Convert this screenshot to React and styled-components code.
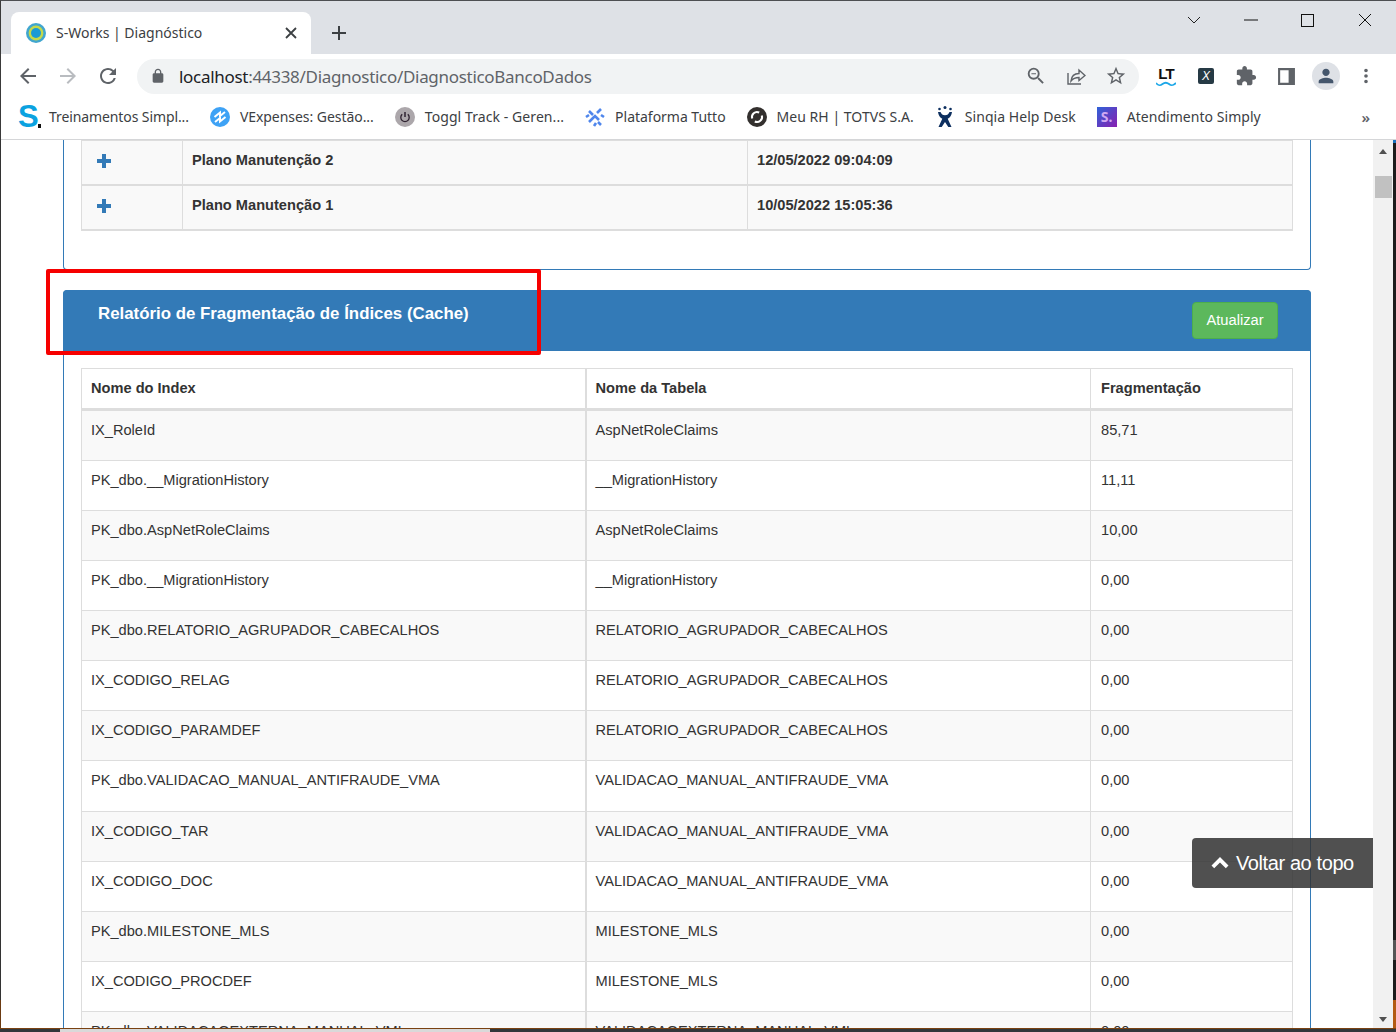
import React from "react";
import styled, { createGlobalStyle } from "styled-components";

const Global = createGlobalStyle`
  html, body { margin: 0; padding: 0; height: 100%; overflow: hidden; background: #fff; }
  * { box-sizing: border-box; }
`;

const Root = styled.div`
  width: 1396px; height: 1032px; display: flex; flex-direction: column; overflow: hidden;
  font-family: "Liberation Sans", Arial, sans-serif; color: #333; background: #fff;
`;
const BrowserChrome = styled.header`
  flex: none; border-top: 1px solid #4d4f52; border-left: 1px solid #3a3a3a;
  font-family: "Noto Sans", sans-serif;
`;
const TabStrip = styled.div`
  height: 53px; background: #dee1e6; display: flex; align-items: flex-end; padding-left: 10px;
`;
const Tab = styled.div`
  width: 300px; height: 42px; background: #fff; border-radius: 8px 8px 0 0;
  display: flex; align-items: center; padding: 0 14px 1px 15px; gap: 10px; position: relative;
`;
const TabTitle = styled.span`
  flex: 1; font-size: 14px; color: #3c4043; white-space: nowrap;
`;
const NewTab = styled.div`
  width: 28px; height: 42px; margin-left: 14px; display: flex; align-items: center; justify-content: center;
`;
const WinControls = styled.div`
  margin-left: auto; align-self: flex-start; display: flex; align-items: center; height: 38px; padding-right: 3px;
`;
const WinBtn = styled.div`
  width: 57px; height: 38px; display: flex; align-items: center; justify-content: center;
`;
const Toolbar = styled.div`
  height: 45px; padding: 5px 10px 6px 7px; display: flex; align-items: center; background: #fff;
`;
const IconBtn = styled.div`
  width: 40px; height: 34px; flex: none; display: flex; align-items: center; justify-content: center;
`;
const Omnibox = styled.div`
  flex: 1; height: 35px; margin: 0 7px 0 9px; background: #f1f3f4; border-radius: 18px;
  display: flex; align-items: center; padding-left: 13px; padding-right: 3px;
`;
const UrlText = styled.div`
  flex: 1; margin-left: 13px; font-size: 17px; letter-spacing: -0.3px; color: #5f6368; white-space: nowrap;
`;
const UrlHost = styled.span` color: #202124; `;
const Avatar = styled.div`
  width: 28px; height: 28px; border-radius: 50%; background: #dee1e6;
  display: flex; align-items: center; justify-content: center;
`;
const BookmarkBar = styled.nav`
  height: 41px; display: flex; align-items: center; padding: 0 0 5px 17px; gap: 20px;
  background: #fff; border-bottom: 1px solid #d5d6d8; position: relative;
`;
const Bookmark = styled.a`
  display: flex; align-items: center; gap: 9px; font-size: 14px; color: #3c4043;
  white-space: nowrap; letter-spacing: ${p => p.$track}px;
`;
const Favicon = styled.span`
  width: 22px; height: 22px; flex: none; display: flex; align-items: center; justify-content: center;
`;
const SLogo = styled.span`
  font: bold 31px/22px "Liberation Sans", sans-serif; color: #0ba2e0; position: relative; width: 22px; height: 22px;
  &::after { content: ""; position: absolute; right: -1px; bottom: 0; width: 3px; height: 4px; background: #111; }
`;
const SquareLogo = styled.span`
  width: 20px; height: 20px; flex: none; background: linear-gradient(135deg, #2f62d8, #8a1fb0);
  color: #cfa8f2; font: bold 14px/20px "Noto Sans", sans-serif; text-align: center;
`;
const More = styled.span`
  margin-left: auto; padding-right: 26px; font-size: 15px; color: #5f6368; font-weight: 600;
`;
const LtBadge = styled.span`
  display: flex; flex-direction: column; align-items: center; width: 20px;
  font: bold 15px/15px "Liberation Sans", sans-serif; color: #111; letter-spacing: -0.8px;
`;
const XBadge = styled.span`
  width: 16px; height: 16px; border-radius: 2px; background: #263a45; color: #fff;
  font: italic 12px/16px "Liberation Sans", sans-serif; text-align: center;
`;

const PageRow = styled.div`
  flex: 1; min-height: 0; display: flex; position: relative;
`;
const LeftEdge = styled.div`
  width: 1px; flex: none; background: linear-gradient(#333 0 860px, #6b3a12 860px);
`;
const RightEdge = styled.div`
  width: 3px; flex: none;
  background: linear-gradient(#1a73c0 0 3px, #1c1c1c 3px 800px, #555 800px 820px, #1c1c1c 820px 860px, #b35a12 860px);
`;
const BottomEdge = styled.div`
  height: 4px; flex: none; border-top: 1px solid #7a4212; display: flex;
  background: #33373a; padding-left: 60px;
`;
const TaskStrip = styled.div`
  width: 430px; background: #d9d9d9;
`;
const Viewport = styled.main`
  flex: 1; min-width: 0; overflow: hidden; position: relative; padding: 0 62px;
`;
const Scrollbar = styled.div`
  width: 20px; flex: none; background: #f1f1f1; display: flex; flex-direction: column; align-items: center;
  padding: 9px 0 6px;
`;
const ScrollThumb = styled.div`
  width: 17px; height: 22px; margin-top: 22px; margin-left: 1px; background: #c1c1c1;
`;
const ScrollArrow = styled.div`
  width: 0; height: 0; border-left: 4.5px solid transparent; border-right: 4.5px solid transparent;
  ${p => p.$down ? "border-top: 5px solid #505050; margin-top: auto;" : "border-bottom: 5px solid #505050;"}
`;
const Panel = styled.section`
  border: 1px solid #337ab7; border-radius: 4px;
  ${p => p.$cut ? "border-top: 0; border-top-left-radius: 0; border-top-right-radius: 0; padding: 0 17px 38px; margin-bottom: 20px;" : ""}
`;
const PanelHead = styled.div`
  height: 61px; margin: -1px -1px 0; background: #337ab7; border-radius: 4px 4px 0 0;
  display: flex; justify-content: space-between; align-items: flex-start; padding: 12px 33px 0 35px;
`;
const PanelTitle = styled.h3`
  margin: 0; padding-top: 3px; font: bold 16.85px/18px "Liberation Sans", sans-serif; color: #fff;
`;
const RefreshBtn = styled.button`
  width: 86px; height: 37px; border: 1px solid #4cae4c; border-radius: 4px; background: #5cb85c;
  color: #fff; font: 14.7px "Liberation Sans", sans-serif; padding: 0;
`;
const PanelBody = styled.div`
  padding: 17px 17px 0;
`;
const Table = styled.table`
  width: 100%; border-collapse: collapse; table-layout: fixed;
  font-size: 14.62px; line-height: 20px; color: #333;
`;
const PlanRow = styled.tr`
  height: 45px; background: #f9f9f9; border-bottom: 2px solid #ddd;
  &:first-child { height: 44px; }
`;
const PlanCell = styled.td`
  border: 1px solid #ddd; border-bottom: 2px solid #ddd; padding: 0 9px 4px 9px; font-weight: bold;
  tr:first-child > & { padding-bottom: 5px; }
`;
const PlusCell = styled.td`
  border: 1px solid #ddd; border-bottom: 2px solid #ddd; padding: 0 0 3px 15px;
`;
const HeadCell = styled.th`
  height: 41.3px; border: 1px solid #ddd; border-bottom: 3px solid #ddd; padding: 0 9px 1px;
  text-align: left; font-weight: bold; background: #fff;
  &:nth-child(2) { border-left-width: 2px; }
  &:last-child { padding-left: 10px; }
`;
const DataRow = styled.tr`
  height: 50.1px;
  background: ${p => p.$odd ? "#f9f9f9" : "#fff"};
  &:first-child { height: 51.1px; }
`;
const DataCell = styled.td`
  border: 1px solid #ddd; padding: 9px 9px 0; vertical-align: top; white-space: nowrap;
  &:nth-child(2) { border-left-width: 2px; }
  &:last-child { padding-left: 10px; }
`;
const RedBox = styled.div`
  position: absolute; left: 45px; top: 129px; width: 495px; height: 86px;
  border: 4px solid #f60000; border-radius: 2px; pointer-events: none;
`;
const BackTop = styled.a`
  position: absolute; right: 0; top: 698px; width: 181px; height: 50px;
  background: rgba(51,51,51,.86); border-radius: 4px 0 0 4px; color: #fff;
  display: flex; align-items: center; gap: 7px; padding: 0 0 0 19px;
  font: 20px "Liberation Sans", sans-serif; letter-spacing: -0.4px;
`;

const Ic = ({ d, size = 24, color = "#5f6368", flip }) => (
  <svg width={size} height={size} viewBox="0 0 24 24" fill={color} style={flip ? { transform: "scaleX(-1)" } : undefined}><path d={d} /></svg>
);
const P = {
  back: "M20 11H7.83l5.59-5.59L12 4l-8 8 8 8 1.41-1.41L7.83 13H20v-2z",
  reload: "M17.65 6.35A7.958 7.958 0 0 0 12 4c-4.42 0-7.99 3.58-7.99 8s3.57 8 7.99 8c3.73 0 6.84-2.55 7.73-6h-2.08A5.99 5.99 0 0 1 12 18c-3.31 0-6-2.69-6-6s2.69-6 6-6c1.66 0 3.14.69 4.22 1.78L13 11h7V4l-2.35 2.35z",
  lock: "M18 8h-1V6c0-2.76-2.24-5-5-5S7 3.24 7 6v2H6c-1.1 0-2 .9-2 2v10c0 1.1.9 2 2 2h12c1.1 0 2-.9 2-2V10c0-1.1-.9-2-2-2zM9 6c0-1.66 1.34-3 3-3s3 1.34 3 3v2H9V6z",
  zoom: "M15.5 14h-.79l-.28-.27A6.471 6.471 0 0 0 16 9.5 6.5 6.5 0 1 0 9.5 16c1.61 0 3.09-.59 4.23-1.57l.27.28v.79l5 4.99L20.49 19l-4.99-5zm-6 0C7.01 14 5 11.99 5 9.5S7.01 5 9.5 5 14 7.01 14 9.5 11.99 14 9.5 14zM7 9h5v1H7z",
  star: "M22 9.24l-7.19-.62L12 2 9.19 8.63 2 9.24l5.46 4.73L5.82 21 12 17.27 18.18 21l-1.63-7.03L22 9.24zM12 15.4l-3.76 2.27 1-4.28-3.32-2.88 4.38-.38L12 6.1l1.71 4.04 4.38.38-3.32 2.88 1 4.28L12 15.4z",
  puzzle: "M20.5 11H19V7c0-1.1-.9-2-2-2h-4V3.5C13 2.12 11.88 1 10.5 1S8 2.12 8 3.5V5H4c-1.1 0-1.99.9-1.99 2v3.8H3.5c1.49 0 2.7 1.21 2.7 2.7s-1.21 2.7-2.7 2.7H2V20c0 1.1.9 2 2 2h3.8v-1.5c0-1.49 1.21-2.7 2.7-2.7 1.49 0 2.7 1.21 2.7 2.7V22H17c1.1 0 2-.9 2-2v-4h1.5c1.38 0 2.5-1.12 2.5-2.5S21.88 11 20.5 11z",
  person: "M12 12c2.21 0 4-1.79 4-4s-1.79-4-4-4-4 1.79-4 4 1.79 4 4 4zm0 2c-2.67 0-8 1.34-8 4v2h16v-2c0-2.66-5.33-4-8-4z",
  dots: "M12 8a2 2 0 1 0 0-4 2 2 0 0 0 0 4zm0 2a2 2 0 1 0 0 4 2 2 0 0 0 0-4zm0 6a2 2 0 1 0 0 4 2 2 0 0 0 0-4z",
};

const TabFavicon = () => (
  <svg width="20" height="20" viewBox="0 0 20 20"><circle cx="10" cy="10" r="10" fill="#41a6cf" /><circle cx="10" cy="10" r="7.4" fill="#c5d94a" /><circle cx="10" cy="10" r="5" fill="#1a9ad6" /></svg>
);
const CloseX = () => (
  <svg width="12" height="12" viewBox="0 0 12 12" stroke="#3c4043" strokeWidth="1.8"><path d="M1 1l10 10M11 1L1 11" /></svg>
);
const Plus = () => (
  <svg width="16" height="16" viewBox="0 0 16 16" fill="#3c4043"><path d="M7 1h2v6h6v2H9v6H7V9H1V7h6z" /></svg>
);
const ShareIcon = () => (
  <svg width="20" height="20" viewBox="0 0 20 20" fill="none" stroke="#5f6368" strokeWidth="1.4"><path d="M2 7v11h13" /><path d="M5 15c.5-5 3.5-7.5 8-7.5V4l6 5.5-6 5V11.5c-3.5 0-6 1-8 3.5z" /></svg>
);
const SidePanel = () => (
  <svg width="19" height="19" viewBox="0 0 18 18"><path fill="#5f6368" fillRule="evenodd" d="M1 1h16v16H1zM3 3v12h8V3z" /></svg>
);
const Wave = () => (
  <svg width="20" height="6" viewBox="0 0 20 6" fill="none" stroke="#1ca7e8" strokeWidth="1.8"><path d="M0 2c2.500 3 4 3 6.500 1s4-2 6.500 0 4 2 7 -1" /></svg>
);
const VExpenses = () => (
  <svg width="20" height="20" viewBox="0 0 20 20"><circle cx="10" cy="10" r="10" fill="#3ea2f5" /><g fill="none" stroke="#fff" strokeWidth="2"><path d="M4.500 10l5.500-4.500v3.500l5-4" /><path d="M15.500 10l-5.500 4.500v-3.500l-5 4" /></g></svg>
);
const Toggl = () => (
  <svg width="20" height="20" viewBox="0 0 20 20"><circle cx="10" cy="10" r="10" fill="#aca7ab" /><path d="M10 5v5" stroke="#2e2230" strokeWidth="1.500" /><path d="M7.200 7.300a4.200 4.200 0 1 0 5.600 0" fill="none" stroke="#2e2230" strokeWidth="1.300" /></svg>
);
const Tutto = () => (
  <svg width="20" height="20" viewBox="0 0 20 20" fill="none" stroke="#4f86ec" strokeWidth="2.600"><path d="M4 4l4 4M16 2l-4 4M1 10l3-2M19 10l-3-2M7 12l3-3 4 4M4 15l3-3M16 18l-3-3M9 19l2-3" /></svg>
);
const Totvs = () => (
  <svg width="20" height="20" viewBox="0 0 20 20"><circle cx="10" cy="10" r="10" fill="#33302e" /><g fill="none" stroke="#fff" strokeWidth="2"><path d="M5.200 11.500a5 5 0 0 1 7-6" /><path d="M14.800 8.500a5 5 0 0 1-7 6" /></g></svg>
);
const Sinqia = () => (
  <svg width="20" height="22" viewBox="0 0 20 22" fill="#0d2f5f"><circle cx="4.500" cy="3" r="1.300" /><circle cx="10" cy="1.600" r="1.500" /><circle cx="15.500" cy="3" r="1.300" /><path d="M3 6h2.500c.7 2 2.300 3.300 4.500 3.300s3.800-1.300 4.500-3.300H17c-.4 3.300-2 5.700-4.300 6.700l3.800 8.300h-3.200L10 16l-3.300 5H3.500l3.800-8.300C5 11.700 3.400 9.300 3 6z" /></svg>
);
const ChevronUp = () => (
  <svg width="18" height="14" viewBox="0 0 18 14" fill="#fff"><path d="M9 1l8.500 8.500-2.700 2.700L9 6.400l-5.800 5.800L.5 9.500z" /></svg>
);
const PlusGlyph = () => (
  <svg width="14" height="14" viewBox="0 0 14 14" fill="#337ab7" style={{ display: "block" }}><path d="M5 0h4v5h5v4H9v5H5V9H0V5h5z" /></svg>
);

const rows = [
  ["IX_RoleId", "AspNetRoleClaims", "85,71"],
  ["PK_dbo.__MigrationHistory", "__MigrationHistory", "11,11"],
  ["PK_dbo.AspNetRoleClaims", "AspNetRoleClaims", "10,00"],
  ["PK_dbo.__MigrationHistory", "__MigrationHistory", "0,00"],
  ["PK_dbo.RELATORIO_AGRUPADOR_CABECALHOS", "RELATORIO_AGRUPADOR_CABECALHOS", "0,00"],
  ["IX_CODIGO_RELAG", "RELATORIO_AGRUPADOR_CABECALHOS", "0,00"],
  ["IX_CODIGO_PARAMDEF", "RELATORIO_AGRUPADOR_CABECALHOS", "0,00"],
  ["PK_dbo.VALIDACAO_MANUAL_ANTIFRAUDE_VMA", "VALIDACAO_MANUAL_ANTIFRAUDE_VMA", "0,00"],
  ["IX_CODIGO_TAR", "VALIDACAO_MANUAL_ANTIFRAUDE_VMA", "0,00"],
  ["IX_CODIGO_DOC", "VALIDACAO_MANUAL_ANTIFRAUDE_VMA", "0,00"],
  ["PK_dbo.MILESTONE_MLS", "MILESTONE_MLS", "0,00"],
  ["IX_CODIGO_PROCDEF", "MILESTONE_MLS", "0,00"],
  ["PK_dbo.VALIDACAOEXTERNA_MANUAL_VML", "VALIDACAOEXTERNA_MANUAL_VML", "0,00"],
];

export default function App() {
  return (
    <Root>
      <Global />
      <BrowserChrome>
        <TabStrip>
          <Tab>
            <TabFavicon />
            <TabTitle>S-Works | Diagnóstico</TabTitle>
            <CloseX />
          </Tab>
          <NewTab><Plus /></NewTab>
          <WinControls>
            <WinBtn><svg width="14" height="8" viewBox="0 0 14 8" fill="none" stroke="#222" strokeWidth="1"><path d="M1 1l6 6 6-6" /></svg></WinBtn>
            <WinBtn><svg width="14" height="2" viewBox="0 0 14 2" stroke="#111" strokeWidth="1"><path d="M0 1h14" /></svg></WinBtn>
            <WinBtn><svg width="13" height="13" viewBox="0 0 13 13" fill="none" stroke="#111" strokeWidth="1"><rect x=".5" y=".5" width="12" height="12" /></svg></WinBtn>
            <WinBtn><svg width="14" height="14" viewBox="0 0 14 14" stroke="#111" strokeWidth="1"><path d="M1 1l12 12M13 1L1 13" /></svg></WinBtn>
          </WinControls>
        </TabStrip>
        <Toolbar>
          <IconBtn><Ic d={P.back} /></IconBtn>
          <IconBtn><Ic d={P.back} flip color="#b9bcc0" /></IconBtn>
          <IconBtn><Ic d={P.reload} /></IconBtn>
          <Omnibox>
            <Ic d={P.lock} size={16} />
            <UrlText><UrlHost>localhost</UrlHost>:44338/Diagnostico/DiagnosticoBancoDados</UrlText>
            <IconBtn><Ic d={P.zoom} size={22} /></IconBtn>
            <IconBtn><ShareIcon /></IconBtn>
            <IconBtn><Ic d={P.star} size={22} /></IconBtn>
          </Omnibox>
          <IconBtn><LtBadge>LT<Wave /></LtBadge></IconBtn>
          <IconBtn><XBadge>X</XBadge></IconBtn>
          <IconBtn><Ic d={P.puzzle} size={22} /></IconBtn>
          <IconBtn><SidePanel /></IconBtn>
          <IconBtn><Avatar><Ic d={P.person} size={22} color="#44566c" /></Avatar></IconBtn>
          <IconBtn><Ic d={P.dots} size={22} /></IconBtn>
        </Toolbar>
        <BookmarkBar>
          <Bookmark $track={-0.1}><Favicon><SLogo>S</SLogo></Favicon>Treinamentos Simpl...</Bookmark>
          <Bookmark $track={-0.05}><Favicon><VExpenses /></Favicon>VExpenses: Gestão...</Bookmark>
          <Bookmark $track={0.08}><Favicon><Toggl /></Favicon>Toggl Track - Geren...</Bookmark>
          <Bookmark $track={-0.02}><Favicon><Tutto /></Favicon>Plataforma Tutto</Bookmark>
          <Bookmark $track={0.03}><Favicon><Totvs /></Favicon>Meu RH | TOTVS S.A.</Bookmark>
          <Bookmark $track={0.05}><Favicon><Sinqia /></Favicon>Sinqia Help Desk</Bookmark>
          <Bookmark $track={0.04}><Favicon><SquareLogo>S.</SquareLogo></Favicon>Atendimento Simply</Bookmark>
          <More>»</More>
        </BookmarkBar>
      </BrowserChrome>
      <PageRow>
        <LeftEdge />
        <Viewport>
          <Panel $cut>
            <Table>
              <colgroup><col style={{ width: 101 }} /><col style={{ width: 565 }} /><col /></colgroup>
              <tbody>
                <PlanRow><PlusCell><PlusGlyph /></PlusCell><PlanCell>Plano Manutenção 2</PlanCell><PlanCell>12/05/2022 09:04:09</PlanCell></PlanRow>
                <PlanRow><PlusCell><PlusGlyph /></PlusCell><PlanCell>Plano Manutenção 1</PlanCell><PlanCell>10/05/2022 15:05:36</PlanCell></PlanRow>
              </tbody>
            </Table>
          </Panel>
          <Panel>
            <PanelHead>
              <PanelTitle>Relatório de Fragmentação de Índices (Cache)</PanelTitle>
              <RefreshBtn>Atualizar</RefreshBtn>
            </PanelHead>
            <PanelBody>
              <Table>
                <colgroup><col style={{ width: 504 }} /><col style={{ width: 505 }} /><col /></colgroup>
                <thead>
                  <tr><HeadCell>Nome do Index</HeadCell><HeadCell>Nome da Tabela</HeadCell><HeadCell>Fragmentação</HeadCell></tr>
                </thead>
                <tbody>
                  {rows.map((r, i) => (
                    <DataRow key={i} $odd={i % 2 === 0}>
                      <DataCell>{r[0]}</DataCell><DataCell>{r[1]}</DataCell><DataCell>{r[2]}</DataCell>
                    </DataRow>
                  ))}
                </tbody>
              </Table>
            </PanelBody>
          </Panel>
          <RedBox />
          <BackTop><ChevronUp />Voltar ao topo</BackTop>
        </Viewport>
        <Scrollbar>
          <ScrollArrow />
          <ScrollThumb />
          <ScrollArrow $down />
        </Scrollbar>
        <RightEdge />
      </PageRow>
      <BottomEdge><TaskStrip /></BottomEdge>
    </Root>
  );
}
